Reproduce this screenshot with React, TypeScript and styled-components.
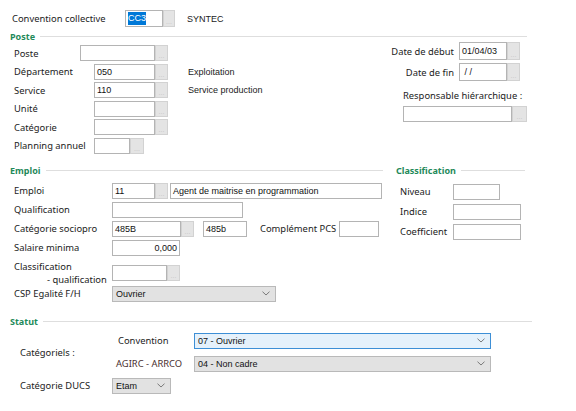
import React from "react";
import styled, { createGlobalStyle } from "styled-components";

const Global = createGlobalStyle`
  html, body { margin: 0; padding: 0; background: #ffffff; }
  body {
    font-family: "Noto Sans", "Open Sans", sans-serif;
    font-size: 9.4px;
    color: #222222;
  }
`;

const Page = styled.div`
  width: 576px;
  height: 411px;
  box-sizing: border-box;
  padding-top: 10px;
  overflow: hidden;
`;

const TopRow = styled.div`
  display: flex;
  align-items: center;
  height: 17px;
  padding-left: 12px;
`;

const Label = styled.div<{ $w?: number; $pl?: number; $color?: string }>`
  flex: none;
  width: ${(p) => (p.$w ? `${p.$w}px` : "auto")};
  padding-left: ${(p) => p.$pl ?? 0}px;
  box-sizing: border-box;
  white-space: nowrap;
  color: ${(p) => p.$color ?? "#222222"};
  line-height: 13px;
`;

const Indent = styled.span`
  display: block;
  padding-left: 33px;
`;

const Value = styled.div<{ $ml?: number }>`
  font-family: "Liberation Sans", Arial, sans-serif;
  font-size: 9px;
  color: #1a1a1a;
  margin-left: ${(p) => p.$ml ?? 0}px;
  white-space: nowrap;
`;

const TextBox = styled.div<{ $w: number; $h?: number; $right?: boolean }>`
  flex: none;
  box-sizing: border-box;
  width: ${(p) => p.$w}px;
  height: ${(p) => p.$h ?? 16}px;
  border: 1px solid #b4b4b4;
  background: #ffffff;
  display: flex;
  align-items: center;
  justify-content: ${(p) => (p.$right ? "flex-end" : "flex-start")};
  padding: 0 2px;
  font-family: "Liberation Sans", Arial, sans-serif;
  font-size: 9px;
  color: #111;
  white-space: nowrap;
  overflow: hidden;
`;

const Selected = styled.span`
  background: #0078d7;
  color: #ffffff;
  padding: 1px 0;
  line-height: 11px;
`;

const DotsButton = styled.div<{ $w?: number; $h?: number }>`
  flex: none;
  box-sizing: border-box;
  width: ${(p) => p.$w ?? 13}px;
  height: ${(p) => p.$h ?? 16}px;
  border: 1px solid #d2d2d2;
  background: #e4e4e4;
  display: flex;
  align-items: flex-end;
  justify-content: center;
  font-family: "Liberation Sans", Arial, sans-serif;
  font-size: 7px;
  line-height: 9px;
  color: #c4c4c4;
`;

const FieldGroup = styled.div<{ $ml?: number }>`
  display: flex;
  flex: none;
  margin-left: ${(p) => p.$ml ?? 0}px;
`;

const Heading = styled.div<{ $pl?: number; $mr?: number; $mt?: number }>`
  display: flex;
  align-items: center;
  gap: 5px;
  height: 12px;
  margin-top: ${(p) => p.$mt ?? 0}px;
  padding-left: ${(p) => p.$pl ?? 10}px;
  margin-right: ${(p) => p.$mr ?? 0}px;
`;

const HeadingText = styled.span`
  font-weight: 700;
  font-size: 9px;
  color: #1f8a5a;
`;

const HeadingLine = styled.div`
  flex: 1;
  height: 1px;
  background: #dedede;
`;

const Columns = styled.div<{ $gap?: number }>`
  display: flex;
  gap: ${(p) => p.$gap ?? 0}px;
`;

const Column = styled.div<{ $w?: number; $pl?: number; $pt?: number; $gap?: number; $mr?: number }>`
  display: flex;
  flex-direction: column;
  flex: ${(p) => (p.$w ? "none" : "1")};
  width: ${(p) => (p.$w ? `${p.$w}px` : "auto")};
  padding-left: ${(p) => p.$pl ?? 0}px;
  padding-top: ${(p) => p.$pt ?? 0}px;
  margin-right: ${(p) => p.$mr ?? 0}px;
  gap: ${(p) => p.$gap ?? 0}px;
  box-sizing: border-box;
`;

const Row = styled.div<{ $h?: number; $mt?: number; $end?: boolean; $pr?: number }>`
  display: flex;
  align-items: center;
  height: ${(p) => p.$h ?? 16}px;
  margin-top: ${(p) => p.$mt ?? 0}px;
  justify-content: ${(p) => (p.$end ? "flex-end" : "flex-start")};
  padding-right: ${(p) => p.$pr ?? 0}px;
`;

const Combo = styled.div<{ $w: number; $focus?: boolean }>`
  flex: none;
  box-sizing: border-box;
  width: ${(p) => p.$w}px;
  height: 16px;
  border: 1px solid ${(p) => (p.$focus ? "#3d8fd6" : "#b9b9b9")};
  background: ${(p) => (p.$focus ? "#e5f1fb" : "#e2e2e2")};
  display: flex;
  align-items: center;
  justify-content: space-between;
  padding: 0 5px 0 3px;
  font-family: "Liberation Sans", Arial, sans-serif;
  font-size: 9px;
  color: #111;
`;

const StatutBody = styled.div`
  display: flex;
  flex-direction: column;
  padding-left: 20px;
  margin-top: 5px;
`;

const CatGroup = styled.div`
  display: flex;
  align-items: center;
`;

const SubRows = styled.div`
  display: flex;
  flex-direction: column;
  gap: 7px;
`;

const Chevron = () => (
  <svg width="8" height="5" viewBox="0 0 8 5">
    <path d="M0.5 0.7 L4 4 L7.5 0.7" fill="none" stroke="#7a7a7a" strokeWidth="1" />
  </svg>
);

const Field = ({ w, value, btn, h, right, bw }: { w: number; value?: React.ReactNode; btn?: boolean; h?: number; right?: boolean; bw?: number }) => (
  <FieldGroup>
    <TextBox $w={w} $h={h} $right={right}>{value}</TextBox>
    {btn && <DotsButton $w={bw} $h={h}>...</DotsButton>}
  </FieldGroup>
);

export default function App() {
  return (
    <Page>
      <Global />
      <TopRow>
        <Label $w={113}>Convention collective</Label>
        <FieldGroup>
          <TextBox $w={38} $h={17}>
            <Selected>CC3</Selected>
          </TextBox>
          <DotsButton $w={12} $h={17}>...</DotsButton>
        </FieldGroup>
        <Value $ml={12}>SYNTEC</Value>
      </TopRow>

      <Heading $mt={3} $mr={49}>
        <HeadingText>Poste</HeadingText>
        <HeadingLine />
      </Heading>

      <Columns>
        <Column $pl={14} $pt={3} $gap={2.6}>
          <Row>
            <Label $w={66}>Poste</Label>
            <Field w={75} btn />
          </Row>
          <Row>
            <Label $w={80}>Département</Label>
            <Field w={61} value="050" btn />
            <Value $ml={20}>Exploitation</Value>
          </Row>
          <Row>
            <Label $w={80}>Service</Label>
            <Field w={61} value="110" btn />
            <Value $ml={20}>Service production</Value>
          </Row>
          <Row>
            <Label $w={80}>Unité</Label>
            <Field w={61} btn />
          </Row>
          <Row>
            <Label $w={80}>Catégorie</Label>
            <Field w={61} btn />
          </Row>
          <Row>
            <Label $w={80}>Planning annuel</Label>
            <Field w={36} btn bw={14} />
          </Row>
        </Column>
        <Column $w={124} $mr={49}>
          <Row $h={18} $end $pr={7}>
            <Label>Date de début</Label>
            <FieldGroup $ml={5}>
              <TextBox $w={48} $h={18}>01/04/03</TextBox>
              <DotsButton $h={18}>...</DotsButton>
            </FieldGroup>
          </Row>
          <Row $h={18} $mt={3} $end $pr={7}>
            <Label>Date de fin</Label>
            <FieldGroup $ml={5}>
              <TextBox $w={48} $h={18}>&nbsp;/ /</TextBox>
              <DotsButton $h={18}>...</DotsButton>
            </FieldGroup>
          </Row>
          <Row $h={13} $mt={8}>
            <Label>Responsable hiérarchique :</Label>
          </Row>
          <Row $mt={4}>
            <Field w={109} btn bw={15} />
          </Row>
        </Column>
      </Columns>

      <Columns $gap={13}>
        <Column $w={383}>
          <Heading $mt={11}>
            <HeadingText>Emploi</HeadingText>
            <HeadingLine />
          </Heading>
          <Column $pl={14} $pt={6} $gap={3}>
            <Row>
              <Label $w={98}>Emploi</Label>
              <Field w={43} value="11" btn />
              <FieldGroup $ml={2}>
                <TextBox $w={212}>Agent de maitrise en programmation</TextBox>
              </FieldGroup>
            </Row>
            <Row>
              <Label $w={98}>Qualification</Label>
              <Field w={131} />
            </Row>
            <Row>
              <Label $w={98}>Catégorie sociopro</Label>
              <Field w={69} value="485B" btn />
              <FieldGroup $ml={9}>
                <TextBox $w={44}>485b</TextBox>
              </FieldGroup>
              <Label $w={92} $pl={13}>Complément PCS</Label>
              <Field w={40} />
            </Row>
            <Row>
              <Label $w={98}>Salaire minima</Label>
              <Field w={68} value="0,000" right />
            </Row>
            <Row $h={24} $mt={2}>
              <Label $w={98}>
                Classification
                <Indent>- qualification</Indent>
              </Label>
              <Field w={55} btn />
            </Row>
            <Row $mt={-2}>
              <Label $w={98}>CSP Egalité F/H</Label>
              <Combo $w={164}>
                <span>Ouvrier</span>
                <Chevron />
              </Combo>
            </Row>
          </Column>
        </Column>
        <Column $w={129}>
          <Heading $mt={11} $pl={0}>
            <HeadingText>Classification</HeadingText>
            <HeadingLine />
          </Heading>
          <Column $pl={4} $pt={7} $gap={4}>
            <Row>
              <Label $w={53}>Niveau</Label>
              <Field w={47} />
            </Row>
            <Row>
              <Label $w={53}>Indice</Label>
              <Field w={68} />
            </Row>
            <Row>
              <Label $w={53}>Coefficient</Label>
              <Field w={68} />
            </Row>
          </Column>
        </Column>
      </Columns>

      <Heading $mt={14} $mr={44}>
        <HeadingText>Statut</HeadingText>
        <HeadingLine />
      </Heading>

      <StatutBody>
        <CatGroup>
          <Label $w={96}>Catégoriels :</Label>
          <SubRows>
            <Row>
              <Label $w={78} $pl={2}>Convention</Label>
              <Combo $w={297} $focus>
                <span>07 - Ouvrier</span>
                <Chevron />
              </Combo>
            </Row>
            <Row>
              <Label $w={78} $color="#4a2f2f">AGIRC - ARRCO</Label>
              <Combo $w={297}>
                <span>04 - Non cadre</span>
                <Chevron />
              </Combo>
            </Row>
          </SubRows>
        </CatGroup>
        <Row $mt={6}>
          <Label $w={92}>Catégorie DUCS</Label>
          <Combo $w={59}>
            <span>Etam</span>
            <Chevron />
          </Combo>
        </Row>
      </StatutBody>
    </Page>
  );
}
